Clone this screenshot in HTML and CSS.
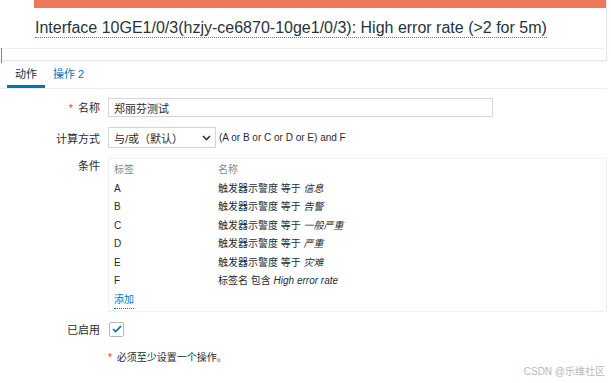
FILE: index.html
```html
<!DOCTYPE html>
<html lang="zh-CN">
<head>
    <meta charset="UTF-8">
    <meta name="viewport" content="width=device-width, initial-scale=1.0">
    <title>动作</title>
    <link rel="stylesheet" href="styles.css">
</head>
<body>
    <div class="page">
        <!-- problem header -->
        <div class="problem">
            <div class="problem-bar"></div>
            <div class="problem-title">
                <span class="hint">Interface 10GE1/0/3(hzjy-ce6870-10ge1/0/3): High error rate (&gt;2 for 5m)</span>
            </div>
            <div class="problem-foot"></div>
            <span class="edge-mark"></span>
        </div>

        <!-- tabs -->
        <ul class="tabs">
            <li class="tab active">动作</li>
            <li class="tab">操作 2</li>
        </ul>

        <form class="form">
            <div class="row row-name">
                <label class="lbl"><span class="req">*</span> 名称</label>
                <input class="text-input" type="text" value="郑丽芬测试">
            </div>

            <div class="row row-calc">
                <label class="lbl">计算方式</label>
                <div class="select">
                    <span>与/或（默认）</span>
                    <svg class="chevron" width="9" height="6" viewBox="0 0 9 6"><path d="M1 1l3.5 3.5L8 1" fill="none" stroke="#333" stroke-width="1.6"/></svg>
                </div>
                <span class="formula">(A or B or C or D or E) and F</span>
            </div>

            <div class="row row-cond">
                <label class="lbl">条件</label>
                <div class="cond-box">
                    <div class="cond-row cond-head">
                        <span class="c-tag">标签</span>
                        <span class="c-name">名称</span>
                    </div>
                    <div class="cond-row"><span class="c-tag">A</span><span class="c-name">触发器示警度 等于 <i>信息</i></span></div>
                    <div class="cond-row"><span class="c-tag">B</span><span class="c-name">触发器示警度 等于 <i>告警</i></span></div>
                    <div class="cond-row"><span class="c-tag">C</span><span class="c-name">触发器示警度 等于 <i>一般严重</i></span></div>
                    <div class="cond-row"><span class="c-tag">D</span><span class="c-name">触发器示警度 等于 <i>严重</i></span></div>
                    <div class="cond-row"><span class="c-tag">E</span><span class="c-name">触发器示警度 等于 <i>灾难</i></span></div>
                    <div class="cond-row"><span class="c-tag">F</span><span class="c-name">标签名 包含 <i>High error rate</i></span></div>
                    <a class="add-link">添加</a>
                </div>
            </div>

            <div class="row row-enabled">
                <label class="lbl">已启用</label>
                <span class="checkbox">
                    <svg width="10" height="8" viewBox="0 0 10 8"><path d="M1 4l2.6 2.6L9 1.2" fill="none" stroke="#0275b8" stroke-width="1.7"/></svg>
                </span>
            </div>

            <div class="row row-note">
                <span class="lbl"></span>
                <span class="note"><span class="req">*</span> 必须至少设置一个操作。</span>
            </div>
        </form>

        <div class="watermark">CSDN @乐维社区</div>
    </div>
</body>
</html>
```

FILE: styles.css
```css
body {
    margin: 0;
    padding: 0;
    background-color: #fff;
    color: #1f2c33;
    font-family: "Liberation Sans", Arial, "Noto Sans CJK SC", sans-serif;
    font-size: 10px;
}

.page {
    position: relative;
    width: 611px;
    height: 383px;
    overflow: hidden;
}

/* problem header */
.problem {
    position: relative;
    width: 606px;
    height: 60px;
    border-right: 1px solid #e6e9eb;
    border-bottom: 1px solid #e6e9eb;
    box-shadow: 0 1px 2px rgba(0, 0, 0, 0.06);
}

.problem-bar {
    margin-left: 34px;
    height: 8px;
    background-color: #ec775a;
}

.problem-title {
    height: 40px;
    padding-left: 35px;
    border-bottom: 1px solid #edf0f2;
    font-size: 16px;
    line-height: 40px;
    color: #27333a;
}

.hint {
    border-bottom: 1px dotted #6e7a82;
    padding-bottom: 1px;
}

.edge-mark {
    position: absolute;
    left: 1px;
    top: 48px;
    width: 1px;
    height: 15px;
    background-color: #4f8fcf;
}

/* tabs */
.tabs {
    list-style: none;
    margin: 4px 0 0;
    padding: 0 0 0 7px;
    width: 600px;
    display: flex;
    border-bottom: 1px solid #ebeef0;
}

.tab {
    padding: 0 8px;
    height: 20px;
    line-height: 18px;
    font-size: 11px;
    color: #0275b8;
    border-bottom: 3px solid transparent;
}

.tab.active {
    color: #1f2c33;
    border-bottom-color: #0275b8;
}

/* form */
.form {
    display: flex;
    flex-direction: column;
    margin-top: 9px;
}

.row {
    display: flex;
    align-items: flex-start;
}

.lbl {
    width: 100px;
    flex: none;
    padding-right: 8px;
    box-sizing: content-box;
    text-align: right;
    font-size: 11px;
    color: #1f2c33;
}

.req {
    color: #e33734;
    margin-right: 2px;
}

.row-name .lbl {
    line-height: 20px;
}

.text-input {
    width: 385px;
    height: 19px;
    box-sizing: border-box;
    margin: 0;
    padding: 0 5px;
    border: 1px solid #cfd8dc;
    font-family: inherit;
    font-size: 11px;
    color: #1f2c33;
}

.row-calc {
    margin-top: 9px;
    align-items: center;
}

.select {
    width: 108px;
    height: 21px;
    box-sizing: border-box;
    border: 1px solid #cfd8dc;
    display: flex;
    align-items: center;
    justify-content: space-between;
    padding: 0 4px 0 5px;
    font-size: 11px;
}

.formula {
    margin-left: 3px;
    font-size: 10px;
}

.row-cond {
    margin-top: 10px;
}

.row-cond .lbl {
    line-height: 16px;
}

.cond-box {
    width: 499px;
    height: 154px;
    box-sizing: border-box;
    border: 1px solid #eef1f3;
    padding: 2px 0 0 5px;
}

.cond-row {
    display: flex;
    height: 18.5px;
    line-height: 18.5px;
}

.cond-head {
    color: #768d99;
}

.c-tag {
    width: 104px;
}

.add-link {
    display: inline-block;
    line-height: 17px;
    color: #0275b8;
    font-size: 10px;
    border-bottom: 1px dotted #0275b8;
}

.row-enabled {
    margin-top: 9px;
    align-items: center;
}

.checkbox {
    width: 13px;
    height: 13px;
    margin-left: 1px;
    border: 1px solid #acbbc2;
    border-radius: 2px;
    display: flex;
    align-items: center;
    justify-content: center;
}

.row-note {
    margin-top: 12px;
}

.note {
    font-size: 10px;
    color: #1f2c33;
}

.watermark {
    position: absolute;
    right: 6px;
    bottom: 5px;
    font-size: 10px;
    color: #b8b8b8;
}
```
